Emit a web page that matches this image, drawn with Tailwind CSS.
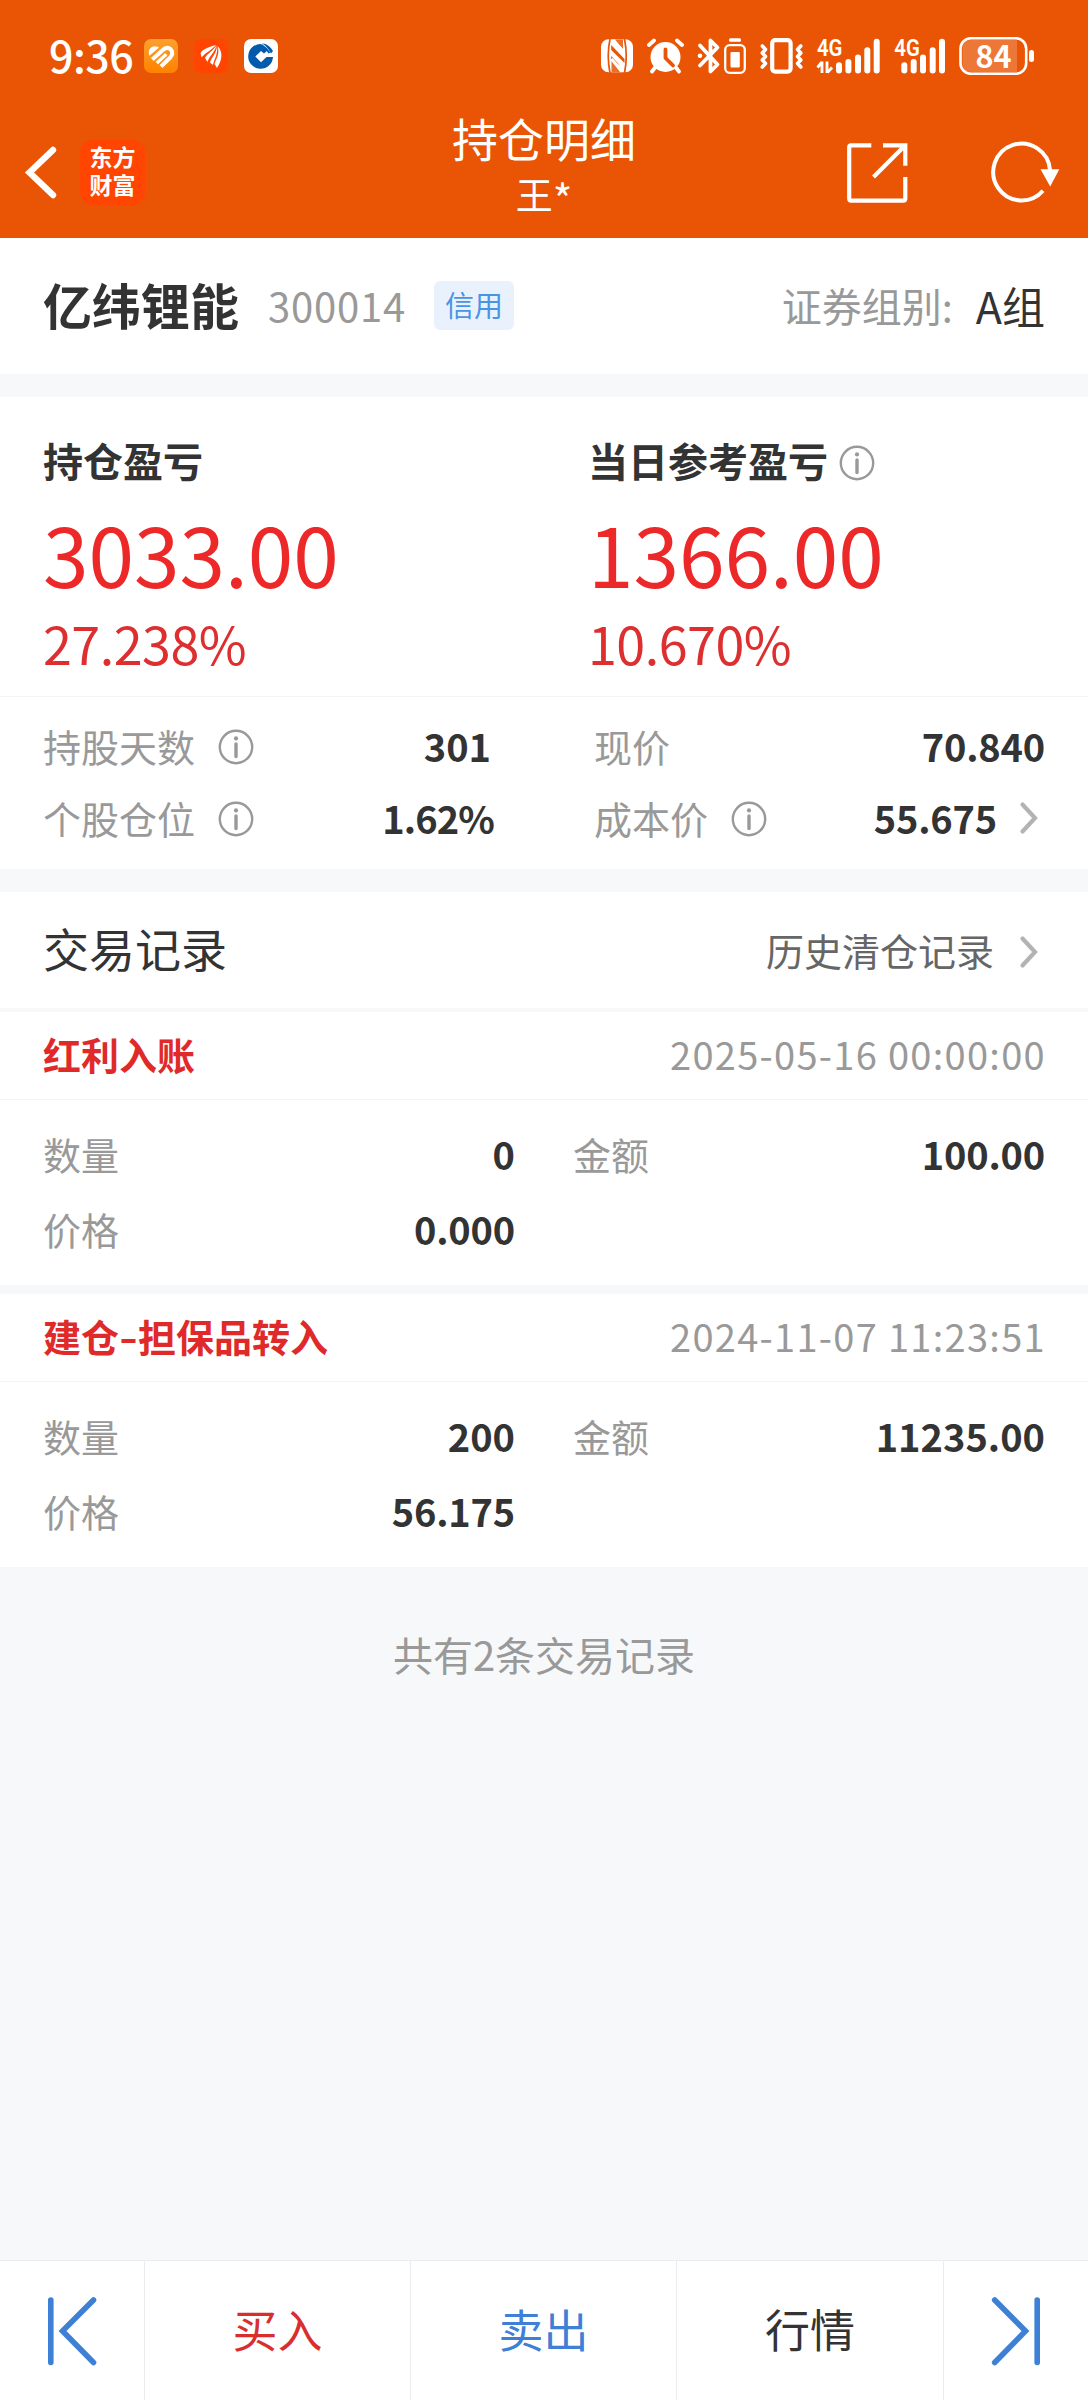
<!DOCTYPE html>
<html lang="zh-CN">
<head>
<meta charset="utf-8">
<title>持仓明细</title>
<script src="https://cdn.jsdelivr.net/npm/@tailwindcss/browser@4"></script>
</head>
<body class="bg-[#f7f8fa] font-['Noto_Sans_CJK_SC',sans-serif] text-[#333]">
<svg class="hidden">
  <symbol id="info" viewBox="0 0 36 36">
    <circle cx="18" cy="18" r="16.2" fill="none" stroke="#999" stroke-width="2.4"/>
    <circle cx="18" cy="9.4" r="2.1" fill="#999"/>
    <path d="M18 14.9v12.6" stroke="#999" stroke-width="3.4" stroke-linecap="round"/>
  </symbol>
  <symbol id="chev" viewBox="0 0 20 34">
    <path d="M3.5 3.5 16 17 3.5 30.500" fill="none" stroke="#b3b3b3" stroke-width="4.200" stroke-linecap="round" stroke-linejoin="miter"/>
  </symbol>
</svg>
<div class="flex flex-col w-[1088px] h-[2400px] overflow-hidden">

  <!-- status bar + title bar -->
  <header class="h-[238px] bg-[#e95504] text-white shrink-0">
    <div class="h-[112px] flex items-center pl-[49px]">
      <div class="w-[95px] text-[43px] leading-[60px] font-medium tracking-[-0.5px] -mt-[5px]">9:36</div>
      <svg class="w-[34px] h-[34px]" viewBox="0 0 34 34">
        <defs><linearGradient id="g" x1="0" y1="0" x2="0" y2="1"><stop offset="0" stop-color="#fca02e"/><stop offset="1" stop-color="#ff8100"/></linearGradient></defs>
        <rect width="34" height="34" rx="7" fill="url(#g)"/>
        <path d="M5.500 16.800C2.500 10 9 4.500 15 8.500Z" fill="#fff"/>
        <path d="M8.300 20.500 18.500 11.300Q23 7 26.700 10.300 30 14.500 26 18.800L17 27.500" fill="none" stroke="#fff" stroke-width="4"/>
        <path d="M12.800 24 22.300 15.200" fill="none" stroke="#fff" stroke-width="3.400"/>
      </svg>
      <svg class="ml-4 w-[34px] h-[34px]" viewBox="0 0 34 34">
        <rect width="34" height="34" rx="7" fill="#ff4500"/>
        <path d="M22 6C15 8 9 10 6.500 14L7.500 18.500C11 14 17 11.500 22 6Z M22.500 6.500C18.500 12.500 13 14.500 11 19L13.500 23C15.500 17 21 13 22.500 6.500Z M23 7C22.300 15 17.500 18 16 23.500L19 26C20 20.500 24.300 15 23 7Z M23.500 7C26 15 22.500 19 20.500 25L23 29C26 24.500 31 15 23.500 7Z" fill="#fff"/>
      </svg>
      <svg class="ml-4 w-[34px] h-[34px]" viewBox="0 0 34 34">
        <rect width="34" height="34" rx="7" fill="#fff"/>
        <path d="M17 5A12.400 12.400 0 1 0 29 18H22.500L17 23.300 11.300 17.600 17 12 20 14.500 23.500 11.500 17 5Z" fill="#005bac"/>
        <path d="M18 4.500Q24 4 29 12L27 14.500Q23 7 18 4.500Z" fill="#005bac"/>
        <path d="M17.500 6Q22.500 9 25.500 14" fill="none" stroke="#005bac" stroke-width="2"/>
      </svg>

      <!-- nfc -->
      <svg class="ml-[323px] w-[33px] h-[38px]" viewBox="601 37 33 38">
        <rect x="601" y="39.300" width="32" height="33" rx="7.500" fill="#fff"/>
        <path d="M610 39Q606.500 56 610 73M624.500 39Q628 56 624.500 73" fill="none" stroke="#e95504" stroke-width="1.700"/>
        <path d="M611.200 45 624.500 59V63L611.200 50ZM611.200 56 620 65.500 611.200 59Z" fill="#e95504"/>
        <path d="M611.500 60V72H620ZM615 39.500H623V49.500Z" fill="#e95504" fill-opacity=".85"/>
        <path d="M611.500 59 622 71.500M613 40.500 624 52" stroke="#fff" stroke-width="3"/>
      </svg>
      <!-- alarm -->
      <svg class="ml-[13px] w-[37px] h-[38px]" viewBox="647 37 37 38">
        <circle cx="665.500" cy="57" r="15" fill="#fff"/>
        <path d="M649 45 654 40.500M682 45 677 40.500M655.500 67 652 71.500M675.500 67 679 71.500" stroke="#fff" stroke-width="3.800" stroke-linecap="round"/>
        <path d="M665.500 49.500V58L673 65.500" fill="none" stroke="#e95504" stroke-width="3.800" stroke-linecap="round" stroke-linejoin="round"/>
      </svg>
      <!-- bluetooth with device battery -->
      <svg class="ml-[13px] w-[50px] h-[38px]" viewBox="697 37 50 38">
        <path d="M700 45.500 717.500 64.500 710.500 71.500V40.500L717.500 47.500 700 65.500" fill="none" stroke="#fff" stroke-width="3.800" stroke-linecap="round" stroke-linejoin="round"/>
        <circle cx="700" cy="55.800" r="2.300" fill="#fff"/>
        <rect x="725.200" y="45.200" width="19.600" height="27.600" rx="4.500" fill="none" stroke="#fff" stroke-width="2.300"/>
        <rect x="729" y="38.300" width="12" height="3.400" rx="1.500" fill="#fff"/>
        <rect x="730.500" y="52" width="9.300" height="15.500" rx="1" fill="#fff"/>
      </svg>
      <!-- vibrate -->
      <svg class="ml-[13px] w-[44px] h-[38px]" viewBox="760 37 44 38">
        <rect x="772.200" y="40.200" width="18.400" height="31.400" rx="3" fill="none" stroke="#fff" stroke-width="4.200"/>
        <path d="M762.300 46 765.500 49.500 762.300 53 765.500 56.500 762.300 60 765.500 63.500 762.300 67M800.800 46 797.600 49.500 800.800 53 797.600 56.500 800.800 60 797.600 63.500 800.800 67" fill="none" stroke="#fff" stroke-width="3.600" stroke-linecap="round" stroke-linejoin="round"/>
      </svg>
      <!-- signal 1 -->
      <svg class="ml-[12px] w-[66px] h-[38px]" viewBox="816 37 66 38" fill="#fff">
        <text x="817" y="56.300" font-family="Roboto" font-weight="600" font-size="23.500" textLength="25.500" lengthAdjust="spacingAndGlyphs">4G</text>
        <path d="M822 61.500V73M817.500 67.500 822 62M827 61.500V73M832 67.500 827.500 72.500" stroke="#fff" stroke-width="2.800" fill="none"/>
        <rect x="836" y="62.300" width="6" height="11.200" rx="3"/><rect x="845.400" y="59" width="6" height="14.500" rx="3"/><rect x="855" y="54.500" width="6" height="19" rx="3"/><rect x="864.300" y="47.300" width="6" height="26.200" rx="3"/><rect x="873.700" y="38.700" width="6" height="34.800" rx="3"/>
      </svg>
      <!-- signal 2 -->
      <svg class="ml-[12px] w-[53px] h-[38px]" viewBox="894 37 53 38" fill="#fff">
        <text x="894.300" y="56.300" font-family="Roboto" font-weight="600" font-size="23.500" textLength="25.500" lengthAdjust="spacingAndGlyphs">4G</text>
        <rect x="901.300" y="62.300" width="6" height="11.200" rx="3"/><rect x="910.700" y="59" width="6" height="14.500" rx="3"/><rect x="920" y="54.500" width="6" height="19" rx="3"/><rect x="929.700" y="47.300" width="6" height="26.200" rx="3"/><rect x="939" y="38.700" width="6" height="34.800" rx="3"/>
      </svg>
      <!-- battery -->
      <svg class="ml-[12px] w-[76px] h-[38px]" viewBox="959 37 76 38" fill="#fff">
        <path d="M971 40H1017V72H971Q962.500 72 962.500 63V49Q962.500 40 971 40Z" fill-opacity=".2"/>
        <rect x="960.500" y="38.200" width="65.700" height="35.600" rx="10.500" fill="none" stroke="#fff" stroke-width="2.600"/>
        <rect x="1029" y="50" width="5" height="12" rx="2.500"/>
        <text x="993.500" y="67.500" text-anchor="middle" font-family="Noto Sans CJK SC" font-weight="700" font-size="30.500">84</text>
      </svg>
    </div>

    <div class="h-[126px] flex">
      <div class="w-[300px] flex items-start pl-[24px] pt-[28px]">
        <svg class="mt-[5px] w-[36px] h-[56px]" viewBox="24 145 36 56"><path d="M53 150 29.500 172.500 53 195" fill="none" stroke="#fff" stroke-width="6.400" stroke-linecap="round"/></svg>
        <div class="ml-[20px] w-[65px] h-[65px] rounded-[13px] bg-[#ff4500] text-[23px] leading-[28px] font-bold text-center pt-[2px]">东方<br>财富</div>
      </div>
      <div class="grow text-center">
        <div class="text-[46px] leading-[50px]">持仓明细</div>
        <div class="flex justify-center text-[37px] leading-[46px] mt-[9px]">王<span class="text-[42px] leading-[54px]">*</span></div>
      </div>
      <div class="w-[300px] flex pt-[29px] pl-[57px]">
        <svg class="w-[64px] h-[64px]" viewBox="845 141 64 64" fill="none" stroke="#fff" stroke-width="4.200">
          <path d="M871.300 145.400H851Q849.200 145.400 849.200 147.500V198.500Q849.200 200.600 851 200.600H903.200Q905.300 200.600 905.300 198.500V177M883 145.400H905.300V165.700M873.500 177 904 146.500"/>
        </svg>
        <svg class="ml-[80px] w-[72px] h-[64px]" viewBox="989 141 72 64">
          <path d="M1043 190.800A28.400 28.400 0 1 1 1050 170" fill="none" stroke="#fff" stroke-width="4"/>
          <path d="M1040.500 169.300H1059.300L1050.200 186.500Z" fill="#fff"/>
        </svg>
      </div>
    </div>
  </header>

  <!-- stock -->
  <section class="h-[136px] bg-white flex items-center pl-[43px] pr-[43px] pb-[2px] shrink-0">
    <h1 class="text-[49px] leading-[60px] font-bold -mt-[2px]">亿纬锂能</h1>
    <span class="ml-[29px] text-[40px] leading-[60px] tracking-[0.8px] text-[#999]">300014</span>
    <span class="ml-[28px] w-[80px] h-[49px] rounded-[6px] bg-[#e9f2fc] text-[#4a94e6] text-[29px] leading-[46px] text-center">信用</span>
    <span class="ml-auto text-[40px] leading-[60px] text-[#999]">证券组别:</span>
    <span class="ml-[23px] text-[43px] leading-[60px]">A组</span>
  </section>

  <!-- profit -->
  <section class="mt-[23px] h-[472px] bg-white shrink-0">
    <div class="grid grid-cols-[545px_1fr] h-[299px] pl-[43px] pt-[36px]">
      <div>
        <div class="text-[40px] leading-[54px] font-bold">持仓盈亏</div>
        <div class="mt-[18px] text-[82px] leading-[96px] text-[#ec2828]">3033.00</div>
        <div class="mt-[11px] text-[52px] leading-[62px] tracking-[-0.5px] text-[#dd2f2f]">27.238%</div>
      </div>
      <div>
        <div class="flex items-center text-[40px] leading-[54px] font-bold">当日参考盈亏<svg class="ml-[11px] mt-[5px] w-[36px] h-[36px]"><use href="#info"/></svg></div>
        <div class="mt-[18px] text-[82px] leading-[96px] text-[#ec2828]">1366.00</div>
        <div class="mt-[11px] text-[52px] leading-[62px] tracking-[-0.5px] text-[#dd2f2f]">10.670%</div>
      </div>
    </div>
    <div class="border-t border-[#f4f4f6] grid grid-cols-[451px_1fr] gap-x-[100px] pl-[43px] pr-[43px] pt-[13px] text-[38px] leading-[72px]">
      <div class="flex items-center text-[#999]">持股天数<svg class="ml-[23px] w-[36px] h-[36px] mt-[1px]"><use href="#info"/></svg><b class="ml-auto pr-[3px] text-[#333]">301</b></div>
      <div class="flex items-center text-[#999]">现价<b class="ml-auto text-[#333] tracking-[-0.2px]">70.840</b></div>
      <div class="flex items-center text-[#999]">个股仓位<svg class="ml-[23px] w-[36px] h-[36px] mt-[1px]"><use href="#info"/></svg><b class="ml-auto text-[#333] tracking-[-0.9px]">1.62%</b></div>
      <div class="flex items-center text-[#999]">成本价<svg class="ml-[23px] w-[36px] h-[36px] mt-[1px]"><use href="#info"/></svg><b class="ml-auto text-[#333] tracking-[-0.2px]">55.675</b><svg class="ml-[22px] mr-[6px] w-[20px] h-[34px]"><use href="#chev"/></svg></div>
    </div>
  </section>

  <!-- trade history -->
  <section class="mt-[23px] h-[116px] bg-white flex items-center pl-[43px] pr-[49px] shrink-0">
    <h2 class="text-[46px] leading-[60px] -mt-[6px]">交易记录</h2>
    <span class="ml-auto text-[38px] leading-[60px] text-[#666]">历史清仓记录</span>
    <svg class="ml-[25px] mt-[3px] w-[20px] h-[34px]"><use href="#chev"/></svg>
  </section>

  <article class="mt-[4px] h-[273px] bg-white shrink-0">
    <div class="h-[88px] border-b border-[#f4f4f6] flex items-center justify-between pl-[43px] pr-[42px] text-[38px] leading-[60px]">
      <b class="text-[#e02a2a] -mt-[4px]">红利入账</b><span class="text-[#999] tracking-[1.300px] -mt-[3px]">2025-05-16 00:00:00</span>
    </div>
    <div class="grid grid-cols-[472px_1fr] gap-x-[58px] pl-[43px] pr-[43px] pt-[16px] text-[38px] leading-[75px] text-[#999]">
      <div class="flex justify-between">数量<b class="text-[#333]">0</b></div>
      <div class="flex justify-between">金额<b class="text-[#333] tracking-[-0.2px]">100.00</b></div>
      <div class="flex justify-between">价格<b class="text-[#333] tracking-[-0.2px]">0.000</b></div>
    </div>
  </article>

  <article class="mt-[9px] h-[273px] bg-white shrink-0">
    <div class="h-[88px] border-b border-[#f4f4f6] flex items-center justify-between pl-[43px] pr-[42px] text-[38px] leading-[60px]">
      <b class="text-[#e02a2a] -mt-[4px]">建仓<span class="inline-block origin-center scale-x-135 px-[2.500px]">-</span>担保品转入</b><span class="text-[#999] tracking-[1.300px] -mt-[3px]">2024-11-07 11:23:51</span>
    </div>
    <div class="grid grid-cols-[472px_1fr] gap-x-[58px] pl-[43px] pr-[43px] pt-[16px] text-[38px] leading-[75px] text-[#999]">
      <div class="flex justify-between">数量<b class="text-[#333]">200</b></div>
      <div class="flex justify-between">金额<b class="text-[#333]">11235.00</b></div>
      <div class="flex justify-between">价格<b class="text-[#333] tracking-[-0.2px]">56.175</b></div>
    </div>
  </article>

  <p class="mt-[57px] text-center text-[40px] leading-[60px] text-[#999]">共有2条交易记录</p>

  <!-- bottom actions -->
  <nav class="mt-auto h-[140px] bg-white border-t border-[#ebecee] grid grid-cols-[145px_266px_266px_267px_1fr] text-[45px] leading-[60px] text-center shrink-0">
    <div class="flex items-center justify-center border-r border-[#ebecee]">
      <svg class="w-[52px] h-[72px]" viewBox="46 2295 52 72" fill="none" stroke="#3d80d6" stroke-width="5.600" stroke-linecap="round"><path d="M50.800 2300V2362.500M93.500 2300 62.500 2331 93.500 2362.500"/></svg>
    </div>
    <div class="pt-[38px] border-r border-[#ebecee] text-[#d92e2e]">买入</div>
    <div class="pt-[38px] border-r border-[#ebecee] text-[#3d80d6]">卖出</div>
    <div class="pt-[38px] border-r border-[#ebecee]">行情</div>
    <div class="flex items-center justify-center">
      <svg class="w-[52px] h-[72px]" viewBox="990 2295 52 72" fill="none" stroke="#3d80d6" stroke-width="5.600" stroke-linecap="round"><path d="M1037.200 2300V2362.500M994.700 2300 1025.500 2331 994.700 2362.500"/></svg>
    </div>
  </nav>
</div>
</body>
</html>
